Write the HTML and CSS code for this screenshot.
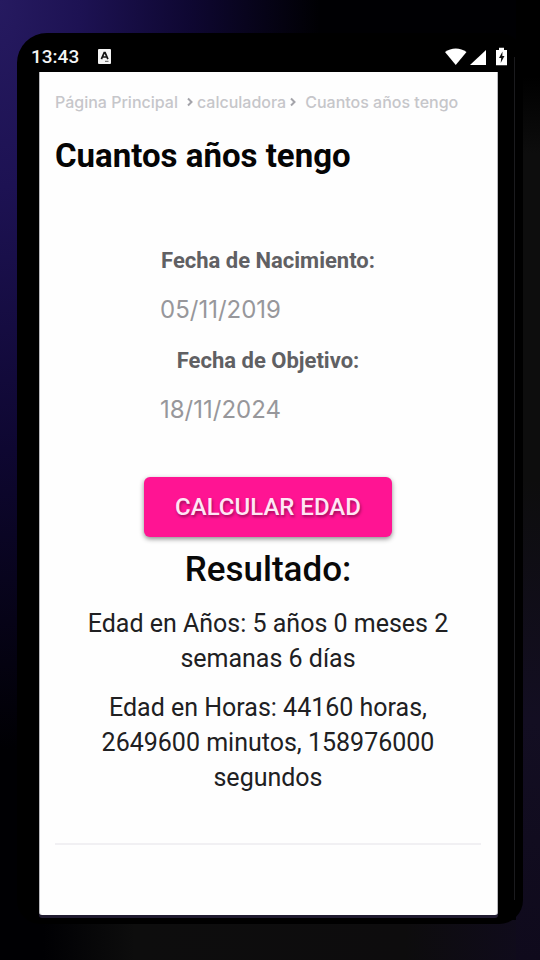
FILE: index.html
```html
<!DOCTYPE html>
<html lang="es">
<head>
<meta charset="utf-8">
<meta name="viewport" content="width=device-width, initial-scale=1">
<title>Cuantos años tengo</title>
<link rel="stylesheet" href="styles.css">
</head>
<body>
<div class="phone">
  <header class="status">
    <div class="status-left">
      <span class="clock">13:43</span>
      <svg class="app-icon" viewBox="0 0 13 15" aria-hidden="true">
        <rect width="13" height="15" rx="1" fill="#f4f4f4"/>
        <path d="M3.4 10.2 6.2 3.6h.9l2.8 6.6M4.6 8h4" fill="none" stroke="#111" stroke-width="1.7"/>
        <path d="M7 12.3h3.5" stroke="#555" stroke-width="1"/>
      </svg>
    </div>
    <svg class="status-icons" viewBox="0 0 62 20" aria-hidden="true">
      <path d="M0 5C6 .2 15.500 .2 21.500 5L10.750 18z" fill="#fff"/>
      <path d="M41 3v15H25z" fill="#fff"/>
      <path d="M51 3h3V.8h5V3h3v15.200H51z" fill="#fff"/>
      <path d="M57.500 4.500 54 11h2.200l-.5 5 3.800-7h-2.200z" fill="#111"/>
    </svg>
  </header>
  <main class="screen">
    <nav class="crumbs" aria-label="Ruta">
      <a href="#">Página Principal</a>
      <svg class="chevron" viewBox="0 0 6 10" aria-hidden="true"><path d="m1 1.500 3.500 3.500L1 8.500"/></svg>
      <a href="#">calculadora</a>
      <svg class="chevron" viewBox="0 0 6 10" aria-hidden="true"><path d="m1 1.500 3.500 3.500L1 8.500"/></svg>
      <span class="current">Cuantos años tengo</span>
    </nav>
    <h1>Cuantos años tengo</h1>
    <form class="form">
      <label for="birth">Fecha de Nacimiento:</label>
      <input id="birth" type="text" value="05/11/2019">
      <label for="target">Fecha de Objetivo:</label>
      <input id="target" type="text" value="18/11/2024">
      <button type="button">CALCULAR EDAD</button>
    </form>
    <section class="result">
      <h2>Resultado:</h2>
      <p>Edad en Años: 5 años 0 meses 2 semanas 6 días</p>
      <p>Edad en Horas: 44160 horas, 2649600 minutos, 158976000 segundos</p>
    </section>
    <hr>
  </main>
</div>
</body>
</html>
```
FILE: styles.css
```css
* {
  box-sizing: border-box;
}

body {
  margin: 0;
  min-height: 100vh;
  padding: 33px 17px 36px;
  display: flex;
  font-family: Roboto, "Liberation Sans", sans-serif;
  background:
    radial-gradient(ellipse 320px 750px at 0 0, #261a60 0, #1d1253 25%, #0e0731 60%, transparent 100%),
    linear-gradient(#000 8%, #0d0d0d 16%, #0d0d0d 50%, #130e22 75%, #0f0a1c 100%) right / 24px 100% no-repeat,
    linear-gradient(90deg, #000003 8%, #0d0d0d 25%, #0d0c0d 75%, #100b1e 100%) bottom / 100% 40px no-repeat,
    #000003;
}

.phone {
  flex: 1;
  display: flex;
  flex-direction: column;
  padding: 0 25px 9px 22px;
  border-radius: 30px 24px 24px 24px;
  background:
    linear-gradient(#1b1b1e, #1b1b1e) right 8px top 24px / 1px calc(100% - 48px) no-repeat,
    #000;
}

.status {
  height: 39px;
  margin: 0 -9px 0 -8px;
  padding-top: 8px;
  display: flex;
  align-items: center;
  justify-content: space-between;
  color: #f4f4f4;
}

.status-left {
  display: flex;
  align-items: center;
  gap: 19px;
}

.clock {
  font-size: 19px;
  font-weight: 500;
}

.app-icon {
  width: 13px;
  height: 15px;
}

.status-icons {
  width: 62px;
  height: 20px;
}

.screen {
  flex: 1;
  padding: 20px 16px 0 15px;
  background: #fefefe;
  border: 1px solid #b9b9bd;
  border-width: 0 1px;
  border-radius: 0 0 3px 3px;
  box-shadow: 0 3px 0 #201b30;
}

.crumbs {
  display: flex;
  align-items: center;
  font-family: Inter, sans-serif;
  font-size: 16px;
  font-weight: 500;
  line-height: 20px;
  color: #c6c6ca;
  white-space: nowrap;
}

.crumbs a {
  color: inherit;
  text-decoration: none;
}

.chevron {
  width: 6px;
  height: 10px;
  margin: 0 4px 0 9px;
  fill: none;
  stroke: #a4a4aa;
  stroke-width: 2;
}

a + .chevron:nth-of-type(2) {
  margin: 0 9px 0 4px;
}

h1 {
  margin: 22px 0 0;
  font-size: 33px;
  line-height: 44px;
  font-weight: 700;
  color: #050505;
}

.form {
  width: 248px;
  margin: 67px auto 0;
  display: flex;
  flex-direction: column;
}

label {
  text-align: center;
  font-size: 22px;
  line-height: 32px;
  font-weight: 700;
  color: #606063;
}

input {
  width: 100%;
  height: 68px;
  padding: 0 16px 4px;
  border: 0;
  background: transparent;
  font-family: Inter, sans-serif;
  font-size: 24px;
  color: #97979b;
}

button {
  height: 60px;
  margin-top: 32px;
  border: 0;
  border-radius: 6px;
  background: #ff1493;
  box-shadow: 0 2px 5px rgba(0, 0, 0, 0.45);
  color: #ffe6f5;
  font-family: inherit;
  font-size: 24px;
  font-weight: 500;
  text-shadow: 1px 2px 3px rgba(0, 0, 0, 0.4);
}

.result {
  padding: 0 16px;
  text-align: center;
}

h2 {
  margin: 11px 0 14px;
  font-size: 35px;
  line-height: 44px;
  font-weight: 500;
  color: #090909;
}

p {
  margin: 0 0 14px;
  font-size: 25px;
  line-height: 35px;
  color: #202022;
}

hr {
  margin: 48px 0 0;
  border: 0;
  border-top: 2px solid #f1f0f3;
}
```
